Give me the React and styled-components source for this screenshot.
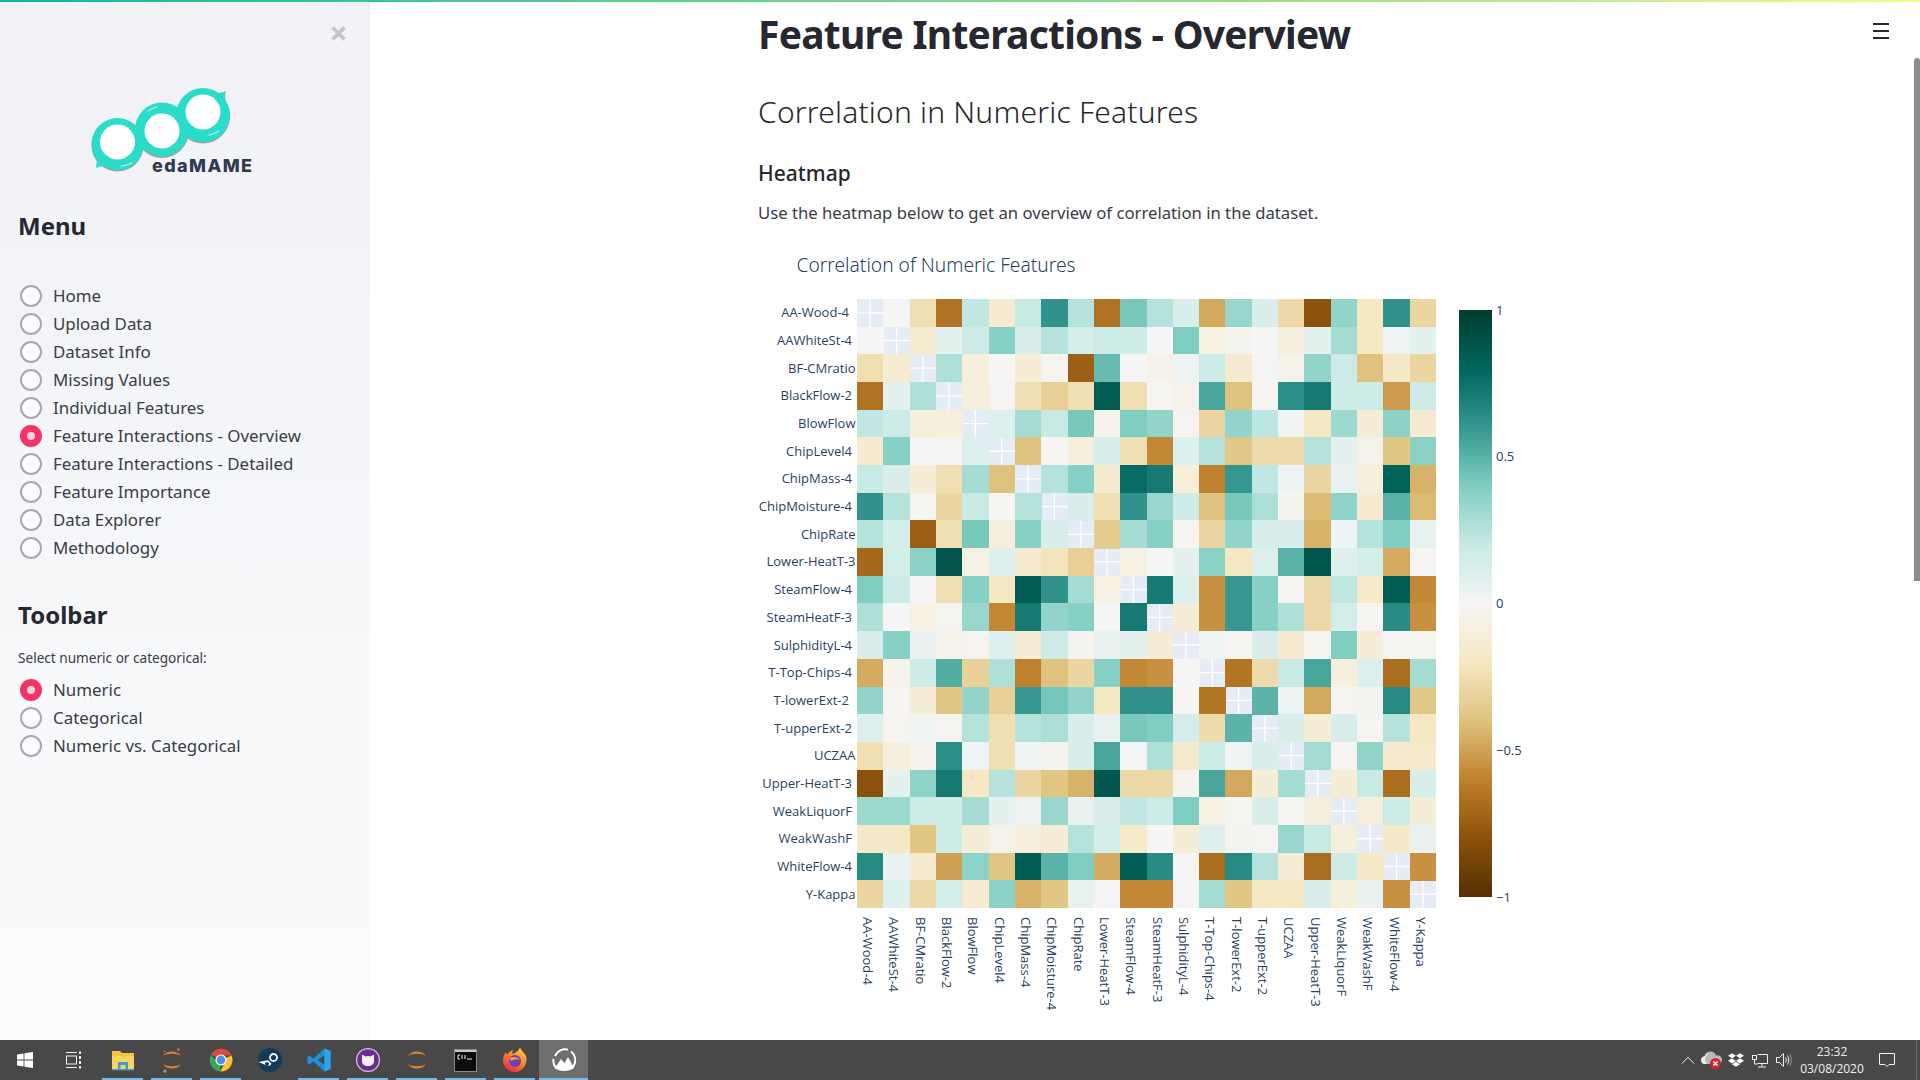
import styled, { createGlobalStyle } from "styled-components";
import { FaDropbox } from "react-icons/fa";

const GlobalStyle = createGlobalStyle`
  html, body { margin: 0; padding: 0; background: #fff; overflow: hidden; }
  * { box-sizing: border-box; }
`;

const UI_FONT = `"Noto Sans", "Open Sans", sans-serif`;

const Page = styled.div`
  position: relative;
  display: flex;
  flex-direction: column;
  width: 1920px;
  height: 1080px;
  overflow: hidden;
  font-family: ${UI_FONT};
  color: #262730;
`;

const Decoration = styled.div`
  position: absolute;
  top: 0;
  left: 0;
  right: 0;
  height: 2px;
  background: linear-gradient(90deg, #0fb5a0 0%, #5fd092 35%, #a3e089 70%, #f6fa8d 100%);
`;

const Workspace = styled.div`
  display: flex;
  flex: 1;
  min-height: 0;
`;

const Sidebar = styled.aside`
  position: relative;
  width: 370px;
  flex-shrink: 0;
  padding: 85px 0 0 18px;
  background: linear-gradient(180deg, #f0f2f6 0%, #f3f5f8 40%, #f7f8fa 60%, #fbfbfb 100%);
`;

const CloseBtn = styled.div`
  position: absolute;
  top: 24px;
  left: 331px;
  width: 15px;
  height: 15px;
  color: #c2c4ca;
`;

const LogoWrap = styled.div`
  height: 100px;
  margin-left: 70px;
`;

const SideHeading = styled.h2`
  margin: ${(p) => p.$top}px 0 0;
  font-size: 24px;
  line-height: 32px;
  font-weight: 700;
  color: #262730;
`;

const RadioGroup = styled.div`
  display: flex;
  flex-direction: column;
  margin-top: ${(p) => p.$top}px;
`;

const RadioRow = styled.div`
  display: flex;
  align-items: center;
  height: 28px;
  padding-left: 2px;
  gap: 11px;
  font-size: 16.9px;
  color: #3a3c47;
`;

const RadioLabel = styled.span`
  position: relative;
  top: -1px;
`;

const RadioDot = styled.span`
  display: flex;
  align-items: center;
  justify-content: center;
  width: 22px;
  height: 22px;
  flex-shrink: 0;
  border-radius: 50%;
  border: 2px solid ${(p) => (p.$checked ? "#f63366" : "#a6a8b2")};
  background: ${(p) => (p.$checked ? "#f63366" : "#fbfbfc")};
  &::after {
    content: "";
    display: ${(p) => (p.$checked ? "block" : "none")};
    width: 8px;
    height: 8px;
    border-radius: 50%;
    background: #f6d5de;
  }
`;

const FieldLabel = styled.div`
  margin-top: 17px;
  font-size: 13.6px;
  line-height: 20px;
  color: #3a3c47;
`;

const Main = styled.main`
  position: relative;
  flex: 1;
  min-width: 0;
`;

const Content = styled.div`
  width: 774px;
  margin: 0 auto;
`;

const Title = styled.h1`
  margin: 6px 0 0;
  font-size: 39px;
  line-height: 56px;
  font-weight: 700;
  letter-spacing: -0.75px;
  color: #262730;
  white-space: nowrap;
`;

const SubTitle = styled.h2`
  margin: 30px 0 0;
  font-size: 30px;
  line-height: 40px;
  font-weight: 300;
  letter-spacing: 0.2px;
  color: #262730;
  white-space: nowrap;
`;

const SectionTitle = styled.h3`
  margin: 26px 0 0;
  font-size: 21px;
  line-height: 30px;
  font-weight: 500;
  color: #262730;
`;

const Lead = styled.p`
  margin: 12px 0 0;
  font-size: 16.7px;
  line-height: 26px;
  color: #3a3c47;
  white-space: nowrap;
`;

const ChartWrap = styled.div`
  margin-top: 14px;
`;

const ChartSvg = styled.svg`
  display: block;
  font-family: "Open Sans", sans-serif;
  text { fill: #2a3f5f; }
`;

const MenuBtn = styled.div`
  position: absolute;
  top: 23px;
  right: 31px;
  display: flex;
  flex-direction: column;
  gap: 5px;
  width: 16px;
`;

const MenuBar = styled.span`
  height: 2px;
  background: #262730;
`;

const ScrollThumb = styled.div`
  position: absolute;
  top: 58px;
  right: 0;
  width: 6px;
  height: 523px;
  border-radius: 3px 3px 0 0;
  background: #8c8c8c;
`;

const Taskbar = styled.footer`
  display: flex;
  align-items: stretch;
  justify-content: space-between;
  height: 40px;
  flex-shrink: 0;
  background: #484848;
`;

const TaskGroup = styled.div`
  display: flex;
  align-items: stretch;
`;

const TaskItem = styled.div`
  position: relative;
  display: flex;
  align-items: center;
  justify-content: center;
  width: ${(p) => p.$w || 49}px;
  background: ${(p) => (p.$active ? "#6e6e6e" : "transparent")};
  &::after {
    content: "";
    display: ${(p) => (p.$open ? "block" : "none")};
    position: absolute;
    left: ${(p) => (p.$active ? 0 : 4)}px;
    right: ${(p) => (p.$active ? 0 : 4)}px;
    bottom: 0;
    height: 2px;
    background: #76b9ed;
  }
`;

const Tray = styled.div`
  display: flex;
  align-items: center;
  color: #fff;
  padding-right: 10px;
  border-right: 1px solid #6a6a6a;
  margin-right: 3px;
`;

const TraySlot = styled.div`
  display: flex;
  align-items: center;
  justify-content: center;
  width: ${(p) => p.$w || 24}px;
`;

const Clock = styled.div`
  width: 72px;
  font-family: "Open Sans", sans-serif;
  font-size: 12px;
  line-height: 17px;
  text-align: center;
  color: #f0f0f0;
`;

const MENU = [
  "Home",
  "Upload Data",
  "Dataset Info",
  "Missing Values",
  "Individual Features",
  "Feature Interactions - Overview",
  "Feature Interactions - Detailed",
  "Feature Importance",
  "Data Explorer",
  "Methodology",
];

const TOOLBAR = ["Numeric", "Categorical", "Numeric vs. Categorical"];

// label, and where its right edge sits (the source names carry trailing spaces)
const FEATURES = [
  ["AA-Wood-4", 849], ["AAWhiteSt-4", 852], ["BF-CMratio", 855.5], ["BlackFlow-2", 852],
  ["BlowFlow", 855.5], ["ChipLevel4", 852], ["ChipMass-4", 852], ["ChipMoisture-4", 852],
  ["ChipRate", 855.5], ["Lower-HeatT-3", 855.5], ["SteamFlow-4", 852], ["SteamHeatF-3", 852],
  ["SulphidityL-4", 852], ["T-Top-Chips-4", 852], ["T-lowerExt-2", 849], ["T-upperExt-2", 852],
  ["UCZAA", 855.5], ["Upper-HeatT-3", 852], ["WeakLiquorF", 852], ["WeakWashF", 852],
  ["WhiteFlow-4", 852], ["Y-Kappa", 855.5],
];

const _ = null;
const CORR = [
  [_, 0, -25, -66, 22, -15, 20, 62, 25, -66, 42, 25, 13, -48, 33, 12, -28, -80, 35, -20, 62, -30],
  [0, _, -14, 8, 18, 38, 12, 25, 15, 17, 17, 0, 40, -8, -3, 0, -10, 8, 30, -20, 3, 8],
  [-25, -14, _, 27, -10, 0, -13, -2, -74, 47, 0, -6, 4, 17, -15, 1, -5, 35, 18, -40, -18, -30],
  [-66, 8, 27, _, -10, -1, -25, -33, -25, 85, -25, -2, -4, 55, -40, -2, 63, 72, 17, 17, -52, 18],
  [22, 18, -10, -10, _, 10, 30, 20, 42, -5, 40, 35, -2, -30, 35, 23, 2, -20, 32, -12, 37, -15],
  [-15, 38, 0, -1, 10, _, -40, -2, -10, 13, -25, -58, 10, 25, -37, -27, -27, 25, 8, -4, -38, 37],
  [20, 12, -13, -25, 30, -40, _, 25, 38, -15, 78, 72, -10, -60, 60, 22, 4, -30, 5, -10, 82, -45],
  [62, 25, -2, -30, 20, -2, 25, _, 12, -25, 62, 33, 17, -40, 42, 28, -3, -42, 36, -15, 50, -42],
  [25, 15, -74, -25, 42, -10, 38, 12, _, -35, 30, 38, -2, -30, 35, 13, 13, -45, 4, 25, 40, 6],
  [-70, 15, 37, 88, -8, 10, -15, -22, -33, _, -8, 0, 7, 37, -20, 10, 50, 87, 10, 15, -47, -1],
  [40, 18, 0, -25, 38, -20, 85, 62, 30, -8, _, 72, 10, -55, 60, 38, -2, -28, 22, -17, 85, -58],
  [27, 0, -8, -2, 33, -58, 72, 35, 38, 0, 72, _, -12, -55, 60, 38, 27, -28, 15, -2, 65, -55],
  [12, 38, 5, -5, -2, 10, -12, 18, -3, 5, 8, -12, _, 2, -2, 12, -15, -2, 40, -12, -2, -2],
  [-47, -5, 17, 52, -32, 27, -60, -40, -30, 38, -58, -55, 0, _, -65, -27, 20, 55, -10, 10, -68, 30],
  [35, -2, -12, -38, 35, -33, 60, 43, 35, -20, 62, 62, -2, -65, _, 50, 4, -48, -2, -3, 65, -37],
  [10, -2, 2, -2, 25, -25, 25, 28, 13, 5, 42, 40, 14, -27, 50, _, 12, -13, 12, -2, 25, -20],
  [-25, -10, -5, 63, 3, -25, 3, -3, 13, 55, 0, 27, -17, 18, 3, 12, _, 30, -2, 35, -15, -17],
  [-80, 7, 36, 72, -20, 25, -30, -38, -45, 87, -28, -28, -3, 55, -48, -12, 30, _, -12, 20, -68, 13],
  [32, 32, 17, 17, 30, 7, 4, 33, 5, 12, 22, 17, 40, -8, -2, 12, -2, -10, _, -10, 17, -12],
  [-18, -18, -38, 17, -12, -4, -10, -12, 25, 15, -17, 0, -12, 10, -3, -1, 33, 20, -10, _, -18, 5],
  [65, 5, -15, -50, 36, -38, 85, 50, 40, -47, 85, 65, -1, -68, 65, 25, -13, -68, 18, -18, _, -55],
  [-30, 10, -28, 15, -14, 37, -45, -38, 6, -1, -58, -58, 0, 30, -38, -20, -20, 12, -10, 5, -55, _],
];

const BRBG = [
  [-1, [84, 48, 5]], [-0.8, [140, 81, 10]], [-0.6, [191, 129, 45]], [-0.4, [223, 194, 125]],
  [-0.2, [246, 232, 195]], [0, [245, 245, 245]], [0.2, [199, 234, 229]], [0.4, [128, 205, 193]],
  [0.6, [53, 151, 143]], [0.8, [1, 102, 94]], [1, [0, 60, 48]],
];

const hex = (rgb) => `rgb(${rgb.map(Math.round).join(",")})`;

const colorFor = (v) => {
  const i = Math.min(Math.floor((v + 1) / 0.2), 9);
  const [a, ca] = BRBG[i];
  const t = (v - a) / 0.2;
  return hex(ca.map((c, k) => c + (BRBG[i + 1][1][k] - c) * t));
};

// svg origin on the page
const OX = 758;
const OY = 240;
const PX = 857 - OX;
const PY = 299 - OY;
const CW = 26.32;
const CH = 27.68;
const N = FEATURES.length;

const Heatmap = () => (
  <ChartSvg width="774" height="790" viewBox="0 0 774 790">
    <defs>
      <linearGradient id="brbg" x1="0" y1="1" x2="0" y2="0">
        {BRBG.map(([v, c]) => (
          <stop key={v} offset={(v + 1) / 2} stopColor={hex(c)} />
        ))}
      </linearGradient>
    </defs>
    <text x="38.5" y="31.5" fontSize="19.2" fontWeight="300" fontFamily={UI_FONT} style={{ fill: "#2a3f5f" }}>
      Correlation of Numeric Features
    </text>
    <rect x={PX} y={PY} width={CW * N} height={CH * N} fill="#e5ecf6" />
    {FEATURES.map(([name], i) => (
      <g key={name} stroke="#fff" strokeWidth="1.3">
        <line x1={PX + CW * (i + 0.5)} x2={PX + CW * (i + 0.5)} y1={PY} y2={PY + CH * N} />
        <line y1={PY + CH * (i + 0.5)} y2={PY + CH * (i + 0.5)} x1={PX} x2={PX + CW * N} />
      </g>
    ))}
    {CORR.map((row, r) =>
      row.map((v, c) =>
        v === null ? null : (
          <rect
            key={`${r}-${c}`}
            x={PX + CW * c}
            y={PY + CH * r}
            width={CW + 0.4}
            height={CH + 0.4}
            fill={colorFor(v / 100)}
            shapeRendering="crispEdges"
          />
        )
      )
    )}
    {FEATURES.map(([name, right], i) => (
      <text key={name} x={right - OX} y={PY + CH * (i + 0.5) + 4.5} fontSize="13" textAnchor="end">
        {name}
      </text>
    ))}
    {FEATURES.map(([name], i) => (
      <text
        key={name}
        fontSize="13"
        transform={`translate(${PX + CW * (i + 0.5) - 7} ${917 - OY}) rotate(90)`}
      >
        {name}
      </text>
    ))}
    <rect x={1459 - OX} y={310 - OY} width="33" height="587" fill="url(#brbg)" />
    {[["1", 315], ["0.5", 461], ["0", 608], ["−0.5", 755], ["−1", 902]].map(([t, y]) => (
      <text key={t} x={1496 - OX} y={y - OY} fontSize="13">
        {t}
      </text>
    ))}
  </ChartSvg>
);

const Logo = () => (
  <svg width="180" height="100" viewBox="0 0 180 100">
    <g fill="#9aa5a5">
      <circle cx="29.5" cy="60.5" r="26" />
      <circle cx="74" cy="46" r="27" />
      <circle cx="115" cy="31.5" r="27" />
    </g>
    <g fill="#2bdccb">
      <circle cx="29.5" cy="59" r="26" />
      <circle cx="74" cy="44.5" r="27" />
      <circle cx="115" cy="30" r="27" />
      <path d="M8 83 C9 76 9 70 12 66 L30 78 C22 82 14 80 8 83Z" />
      <path d="M138 6 C135 14 140 20 141 28 L118 12 C126 7 131 9 138 6Z" />
    </g>
    <g fill="#fff">
      <circle cx="29.5" cy="57" r="17.5" />
      <circle cx="74" cy="46" r="17.5" />
      <circle cx="115" cy="27" r="17.5" />
    </g>
    <g fill="none" stroke="#fff" strokeWidth="0.8" strokeLinecap="round">
      <path d="M33 81 C36 81 39 80 44 78" />
      <path d="M60 26 C63 24 66 23 69 22" />
      <path d="M121 50 C124 50 127 48 131 46" />
    </g>
    <text x="64" y="87" fontFamily="Inter, sans-serif" fontWeight="800" fontSize="18" fill="#2f3a50" textLength="100">
      edaMAME
    </text>
  </svg>
);

const WinLogo = () => (
  <svg width="16" height="16" viewBox="0 0 16 16" fill="#fff">
    <path d="M0 2.4 6.6 1.4V7.6H0ZM7.4 1.3 16 0V7.6H7.4ZM0 8.4H6.6V14.6L0 13.6ZM7.4 8.4H16V16L7.4 14.7Z" />
  </svg>
);

const TaskView = () => (
  <svg width="16" height="18" viewBox="0 0 16 18" fill="none" stroke="#f2f2f2" strokeWidth="1">
    <path d="M0 1.5H11M0 16.5H11" />
    <rect x="0.5" y="5" width="10" height="8" />
    <path d="M14 0.5V3M14 5V8M14 10V13M14 15V17.5" strokeWidth="2" />
  </svg>
);

const Explorer = () => (
  <svg width="24" height="22" viewBox="0 0 24 22">
    <path d="M1 2H9L11 4H23V20H1Z" fill="#f6c343" />
    <path d="M1 7H23V20H1Z" fill="#fbd35f" />
    <path d="M7 13H17V20H14.5V16H9.5V20H7Z" fill="#3f9bdc" />
    <rect x="1" y="20" width="22" height="1.4" fill="#3f9bdc" />
  </svg>
);

const ArcsIcon = ({ dots }) => (
  <svg width="24" height="26" viewBox="0 0 24 26">
    <path d="M3 9C6 3 18 3 21 9 17 6 7 6 3 9Z" fill="#e67e22" />
    <path d="M3 17C6 23 18 23 21 17 17 20 7 20 3 17Z" fill="#e67e22" />
    {dots && <circle cx="18.5" cy="2.5" r="1.3" fill="#8f8f8f" />}
    {dots && <circle cx="5" cy="24" r="1.8" fill="#8f8f8f" />}
    {dots && <circle cx="4.5" cy="4.5" r="1" fill="#8f8f8f" />}
  </svg>
);

const Chrome = () => (
  <svg width="24" height="24" viewBox="0 0 24 24">
    <path d="M12 12 L2.2 6.5 A11.5 11.5 0 0 1 22.6 7.5 L12 7.5Z" fill="#e04a3f" />
    <path d="M12 12 L22.6 7.5 A11.5 11.5 0 0 1 11 23.4 L16.5 14Z" fill="#f7c62f" />
    <path d="M12 12 L11 23.4 A11.5 11.5 0 0 1 2.2 6.5 L7.5 14Z" fill="#3aa757" />
    <circle cx="12" cy="12" r="5.6" fill="#fff" />
    <circle cx="12" cy="12" r="4.4" fill="#4f8fe6" />
  </svg>
);

const Steam = () => (
  <svg width="24" height="24" viewBox="0 0 24 24">
    <circle cx="12" cy="12" r="12" fill="#123a5c" />
    <path d="M0.5 14 L8 17.2 A3.4 3.4 0 0 0 13.4 15.6 L10 12.2Z" fill="#fff" />
    <circle cx="15.5" cy="9.5" r="4.4" fill="#fff" />
    <circle cx="15.5" cy="9.5" r="2.6" fill="#123a5c" />
    <circle cx="9" cy="16" r="2" fill="#123a5c" />
  </svg>
);

const VsCode = () => (
  <svg width="24" height="24" viewBox="0 0 24 24">
    <path d="M17.5 0.5 23.5 3V21L17.5 23.5 6.5 13.5 2.5 16.6 0.5 15.4V8.6L2.5 7.4 6.5 10.5ZM17.5 7 11 12 17.5 17Z" fill="#1e8fd8" />
    <path d="M17.5 0.5 23.5 3V21L17.5 23.5V17L17.5 7Z" fill="#2ba4ec" />
  </svg>
);

const CatBadge = () => (
  <svg width="24" height="24" viewBox="0 0 24 24">
    <circle cx="12" cy="12" r="11.4" fill="#6a2c91" stroke="#d9cbe4" strokeWidth="1.2" />
    <path d="M6 6.5 9.5 8.6A7 7 0 0 1 14.5 8.6L18 6.5V13C18 16.5 15.5 18 12 18S6 16.5 6 13Z" fill="#f2eef6" />
  </svg>
);

const Terminal = () => (
  <svg width="23" height="23" viewBox="0 0 23 23">
    <rect x="0.5" y="0.5" width="22" height="22" fill="#0c0c0c" stroke="#8a8a8a" />
    <rect x="1" y="1" width="21" height="2" fill="#c8c8c8" />
    <path d="M4 6H6M4 6V10H6M8 6V10M11 6V10M13 10H18" stroke="#f0f0f0" strokeWidth="1" fill="none" />
  </svg>
);

const Firefox = () => (
  <svg width="24" height="26" viewBox="0 0 24 26">
    <defs>
      <linearGradient id="fx" x1="0.8" y1="0" x2="0.2" y2="1">
        <stop offset="0" stopColor="#ffd43b" />
        <stop offset="0.5" stopColor="#ff7a2f" />
        <stop offset="1" stopColor="#e5264f" />
      </linearGradient>
    </defs>
    <path d="M17 0C17.5 3 21 5 23 9 25 15 21 25 12 25 5 25 0 20 0 13 0 10 1 7 3 5L4 8C5 6 7 4 10 3 9 5 9 6 10 7 13 5 16 4 17 0Z" fill="url(#fx)" />
    <circle cx="12" cy="14" r="6" fill="#6b3fb5" />
    <path d="M7 11C10 9 15 10 17 13 15 12 11 12 8 14Z" fill="#ff9d2f" />
  </svg>
);

const ActiveApp = () => (
  <svg width="24" height="24" viewBox="0 0 24 24" fill="none">
    <path d="M3 8A11 11 0 0 1 16 1.6" stroke="#fff" strokeWidth="2" />
    <path d="M19 3.5A11 11 0 0 1 20 20L4 20A11 11 0 0 1 1.5 11" stroke="#fff" strokeWidth="2" />
    <path d="M3 20 9 11 12.5 15 16 9 22 20C17 24 7 24 3 20Z" fill="#fff" />
  </svg>
);

const CloudAlert = () => (
  <svg width="22" height="20" viewBox="0 0 22 20">
    <path d="M3 14A4 4 0 0 1 3.5 6.2 6 6 0 0 1 15 5.5 4.5 4.5 0 0 1 18 14Z" fill="#b9b9b9" />
    <path d="M3 14A4 4 0 0 1 3.5 6.2 6 6 0 0 1 8 3.2 7 7 0 0 0 6 14Z" fill="#ececec" />
    <circle cx="14.5" cy="13.5" r="5.5" fill="#d0262d" />
    <path d="M12.5 11.5 16.5 15.5M16.5 11.5 12.5 15.5" stroke="#fff" strokeWidth="1.5" />
  </svg>
);

const TRAY_STROKE = { fill: "none", stroke: "#f2f2f2", strokeWidth: 1 };

const TASK_ICONS = [
  { id: "explorer", icon: <Explorer />, open: true },
  { id: "spyder", icon: <ArcsIcon dots />, open: true },
  { id: "chrome", icon: <Chrome />, open: true },
  { id: "steam", icon: <Steam /> },
  { id: "vscode", icon: <VsCode />, open: true },
  { id: "cat", icon: <CatBadge />, open: true },
  { id: "jupyter", icon: <ArcsIcon />, open: true },
  { id: "cmd", icon: <Terminal />, open: true },
  { id: "firefox", icon: <Firefox />, open: true },
];

const RadioList = ({ items, selected, top }) => (
  <RadioGroup $top={top}>
    {items.map((item) => (
      <RadioRow key={item}>
        <RadioDot $checked={item === selected} />
        <RadioLabel>{item}</RadioLabel>
      </RadioRow>
    ))}
  </RadioGroup>
);

const App = () => (
  <Page>
    <GlobalStyle />
    <Workspace>
      <Sidebar>
        <CloseBtn>
          <svg width="15" height="15" viewBox="0 0 15 15" stroke="currentColor" strokeWidth="3.6">
            <path d="M1.5 1.5 13.5 13.5M13.5 1.5 1.5 13.5" />
          </svg>
        </CloseBtn>
        <LogoWrap>
          <Logo />
        </LogoWrap>
        <SideHeading $top={25}>Menu</SideHeading>
        <RadioList items={MENU} selected="Feature Interactions - Overview" top={40} />
        <SideHeading $top={37}>Toolbar</SideHeading>
        <FieldLabel>Select numeric or categorical:</FieldLabel>
        <RadioList items={TOOLBAR} selected="Numeric" top={8} />
      </Sidebar>
      <Main>
        <Content>
          <Title>Feature Interactions - Overview</Title>
          <SubTitle>Correlation in Numeric Features</SubTitle>
          <SectionTitle>Heatmap</SectionTitle>
          <Lead>Use the heatmap below to get an overview of correlation in the dataset.</Lead>
          <ChartWrap>
            <Heatmap />
          </ChartWrap>
        </Content>
        <MenuBtn>
          <MenuBar />
          <MenuBar />
          <MenuBar />
        </MenuBtn>
        <ScrollThumb />
      </Main>
    </Workspace>
    <Taskbar>
      <TaskGroup>
        <TaskItem $w={49}><WinLogo /></TaskItem>
        <TaskItem $w={49}><TaskView /></TaskItem>
        {TASK_ICONS.map((t) => (
          <TaskItem key={t.id} $open={t.open}>{t.icon}</TaskItem>
        ))}
        <TaskItem $w={49} $active $open><ActiveApp /></TaskItem>
      </TaskGroup>
      <Tray>
        <TraySlot>
          <svg width="14" height="8" viewBox="0 0 14 8" {...TRAY_STROKE}>
            <path d="M1 7.5 7 1.2 13 7.5" />
          </svg>
        </TraySlot>
        <TraySlot><CloudAlert /></TraySlot>
        <TraySlot><FaDropbox size={16} /></TraySlot>
        <TraySlot>
          <svg width="16" height="16" viewBox="0 0 16 16" {...TRAY_STROKE}>
            <path d="M5.5 2.5H15.5V11.5H5.5M10 11.5V14.5M6 15H14" />
            <rect x="0.5" y="3.5" width="4" height="4" />
            <path d="M2.5 7.5V12H5.5" />
          </svg>
        </TraySlot>
        <TraySlot>
          <svg width="16" height="16" viewBox="0 0 16 16" {...TRAY_STROKE}>
            <path d="M0.5 5.5H3.5L7.5 1.5V14.5L3.5 10.5H0.5Z" />
            <path d="M9.5 5.5C10.5 7 10.5 9 9.5 10.5M11.5 3.5C13 6 13 10 11.5 12.5" />
            <path d="M14 2C15.5 5.5 15.5 10.5 14 14" stroke="#9a9a9a" />
          </svg>
        </TraySlot>
        <Clock>
          <div>23:32</div>
          <div>03/08/2020</div>
        </Clock>
        <TraySlot $w={38}>
          <svg width="16" height="16" viewBox="0 0 16 16" {...TRAY_STROKE}>
            <path d="M0.5 1.5H15.5V12.5H10L8 14.5 6 12.5H0.5Z" />
          </svg>
        </TraySlot>
      </Tray>
    </Taskbar>
    <Decoration />
  </Page>
);

export default App;
